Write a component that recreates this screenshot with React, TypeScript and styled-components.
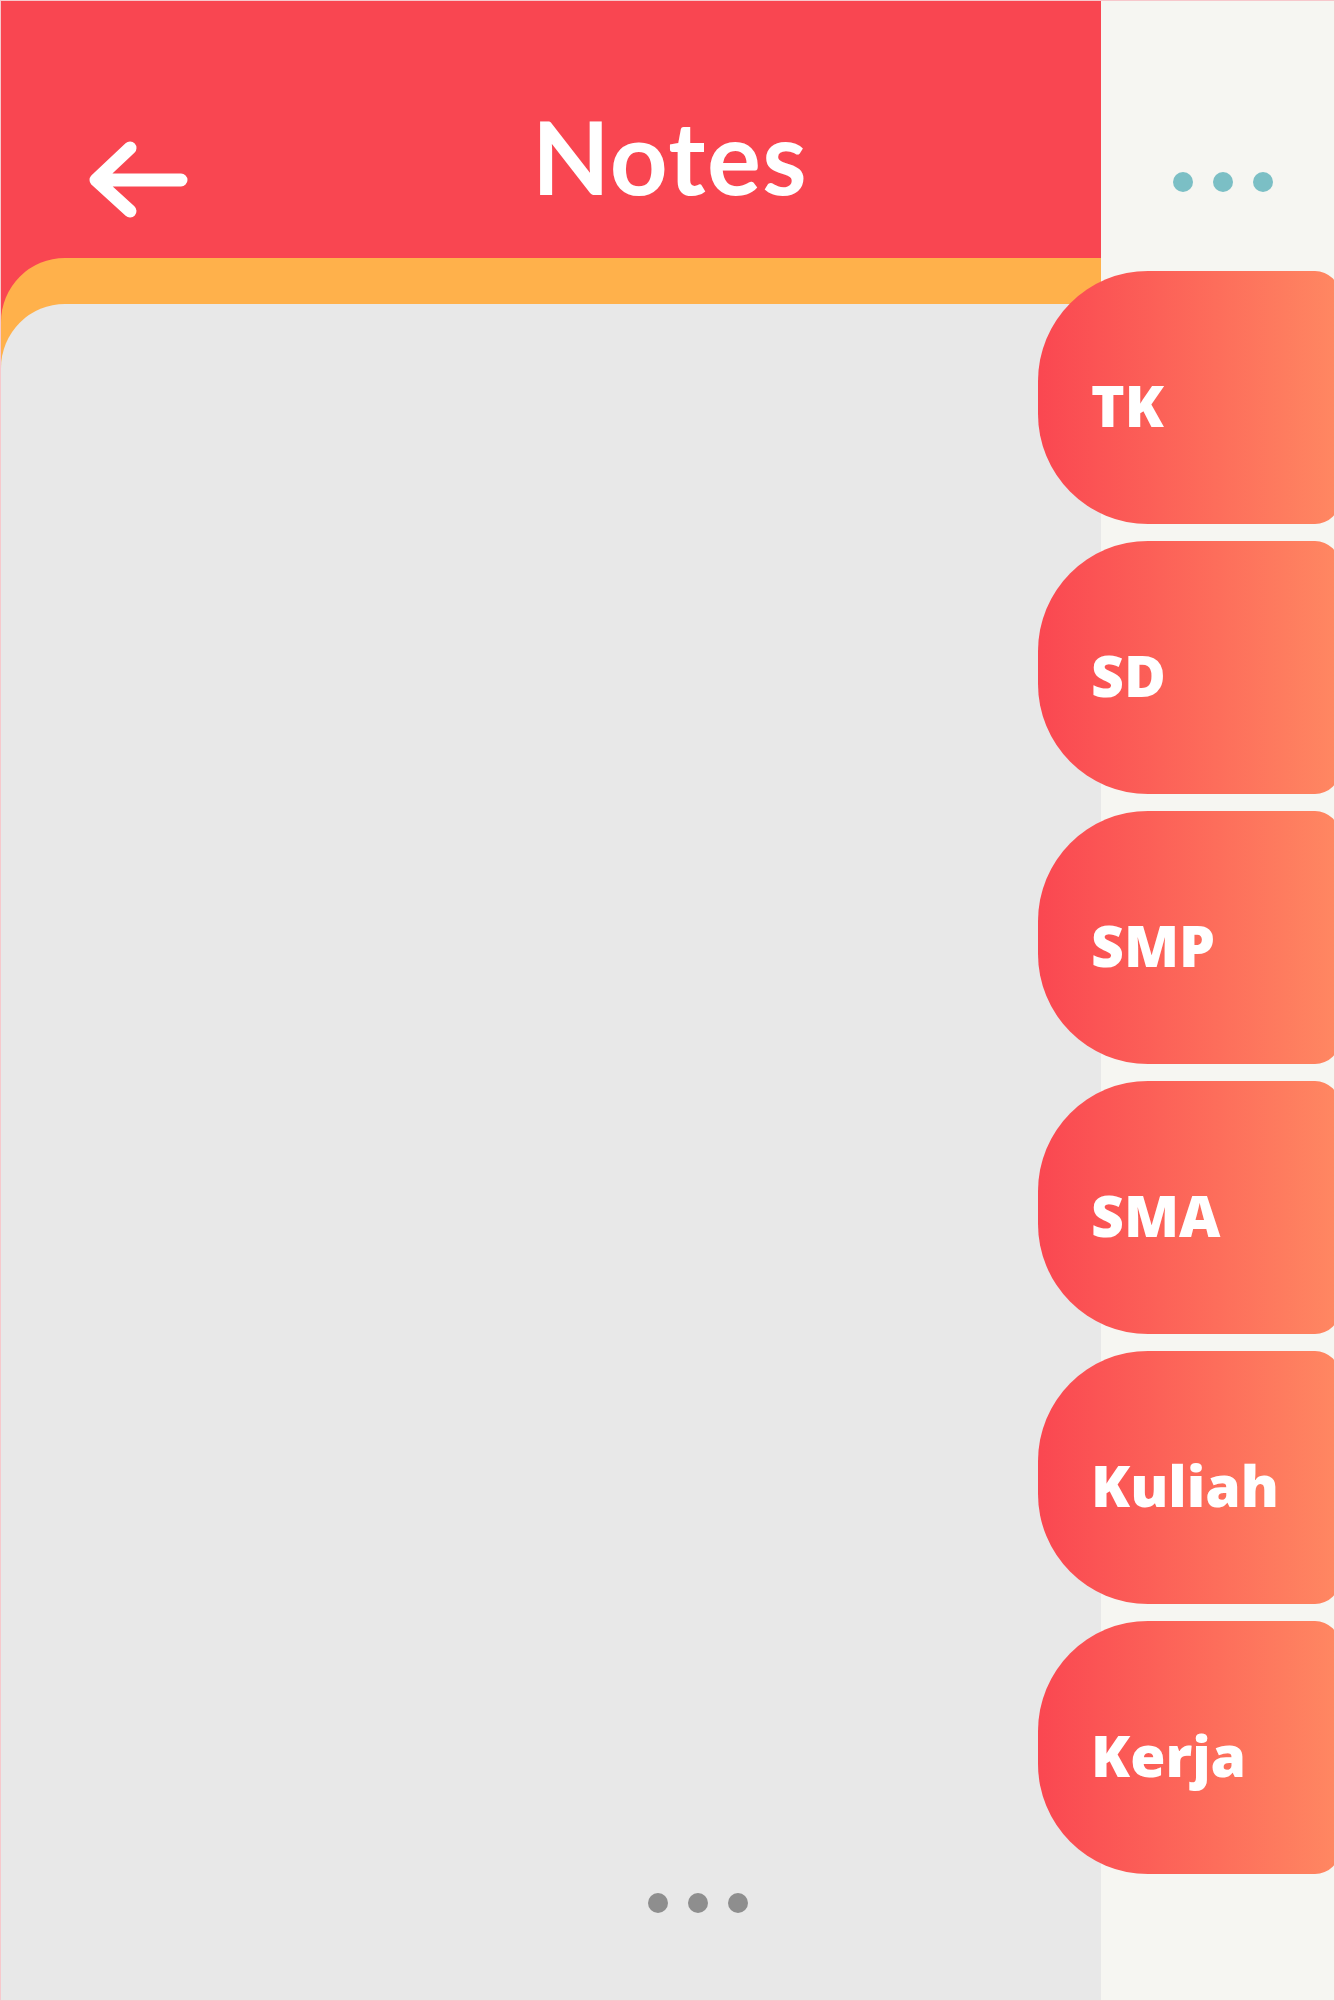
import React from "react";
import styled, { createGlobalStyle } from "styled-components";

const Global = createGlobalStyle`
  html, body { margin: 0; padding: 0; }
  body { background: #ffffff; font-family: "Lato", "Liberation Sans", sans-serif; }
  *, *::before, *::after { box-sizing: border-box; }
`;

const Frame = styled.div`
  width: 1335px;
  height: 2001px;
  border: 1px solid #f7c8cc;
  display: grid;
  grid-template-columns: 1100px 1fr;
  overflow: hidden;
  background: #f6f6f2;
`;

const MainColumn = styled.section`
  display: flex;
  flex-direction: column;
  background: #f94651;
  min-height: 0;
`;

const Header = styled.header`
  height: 257px;
  display: flex;
  align-items: flex-start;
  flex-shrink: 0;
`;

const BackButton = styled.button`
  margin: 134px 0 0 79px;
  padding: 0;
  border: 0;
  background: transparent;
  width: 120px;
  height: 90px;
  cursor: pointer;
  display: block;
`;

const Title = styled.h1`
  margin: 105px 0 0 332px;
  font-family: "Lato", "Liberation Sans", sans-serif;
  font-weight: 700;
  font-size: 101px;
  line-height: 100px;
  color: #ffffff;
  letter-spacing: 1.5px;
`;

const OrangeLayer = styled.div`
  flex: 1;
  display: flex;
  flex-direction: column;
  background: #ffb14b;
  border-top-left-radius: 64px;
  padding-top: 46px;
`;

const GrayLayer = styled.div`
  flex: 1;
  display: flex;
  flex-direction: column;
  justify-content: flex-end;
  background: #e8e8e8;
  border-top-left-radius: 64px;
  padding: 0 0 87px 647px;
`;

const DotRow = styled.div<{ $gap: number }>`
  display: flex;
  gap: ${(p) => p.$gap}px;
`;

const Dot = styled.span<{ $color: string }>`
  width: 20px;
  height: 20px;
  border-radius: 50%;
  background: ${(p) => p.$color};
  display: block;
`;

const SidePanel = styled.aside`
  display: flex;
  flex-direction: column;
  background: #f6f6f2;
`;

const SideDots = styled(DotRow)`
  margin: 171px 0 0 72px;
`;

const TabList = styled.nav`
  margin: 79px 0 0 -63px;
  display: flex;
  flex-direction: column;
  gap: 17px;
`;

const Tab = styled.button`
  width: 302px;
  height: 253px;
  flex-shrink: 0;
  border: 0;
  border-radius: 110px 25px 25px 110px;
  background: linear-gradient(90deg, #fa4751 0%, #ff8862 100%);
  display: flex;
  align-items: center;
  padding: 16px 0 0 53px;
  font-family: "Open Sans", "Liberation Sans", sans-serif;
  font-weight: 800;
  font-size: 57px;
  line-height: 1;
  color: #ffffff;
  cursor: pointer;
  text-align: left;
`;

const tabs = ["TK", "SD", "SMP", "SMA", "Kuliah", "Kerja"];

export default function App() {
  return (
    <>
      <Global />
      <Frame>
        <MainColumn>
          <Header>
            <BackButton aria-label="Back">
              <svg width="120" height="90" viewBox="0 0 120 90" fill="none">
                <path
                  d="M50 13 L16 45 L50 76 M16 45 L101 45"
                  stroke="#ffffff"
                  strokeWidth="13"
                  strokeLinecap="round"
                  strokeLinejoin="round"
                />
              </svg>
            </BackButton>
            <Title>Notes</Title>
          </Header>
          <OrangeLayer>
            <GrayLayer>
              <DotRow $gap={20}>
                <Dot $color="#8e8e8e" />
                <Dot $color="#8e8e8e" />
                <Dot $color="#8e8e8e" />
              </DotRow>
            </GrayLayer>
          </OrangeLayer>
        </MainColumn>
        <SidePanel>
          <SideDots $gap={20}>
            <Dot $color="#7bbfc5" />
            <Dot $color="#7bbfc5" />
            <Dot $color="#7bbfc5" />
          </SideDots>
          <TabList>
            {tabs.map((t) => (
              <Tab key={t}>{t}</Tab>
            ))}
          </TabList>
        </SidePanel>
      </Frame>
    </>
  );
}
